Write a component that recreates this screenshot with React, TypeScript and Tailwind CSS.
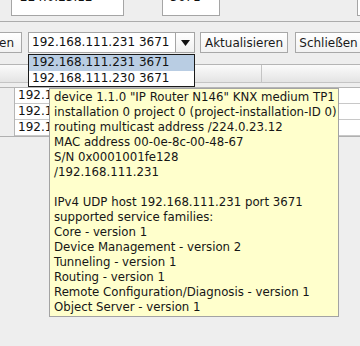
import React from "react";

const tipLines = [
  'device 1.1.0 "IP Router N146" KNX medium TP1',
  "installation 0 project 0 (project-installation-ID 0)",
  "routing multicast address /224.0.23.12",
  "MAC address 00-0e-8c-00-48-67",
  "S/N 0x0001001fe128",
  "/192.168.111.231",
  "",
  "IPv4 UDP host 192.168.111.231 port 3671",
  "supported service families:",
  "Core - version 1",
  "Device Management - version 2",
  "Tunneling - version 1",
  "Routing - version 1",
  "Remote Configuration/Diagnosis - version 1",
  "Object Server - version 1",
];

const rows = ["192.168.111.231 3671", "192.168.111.230 3671", "192.168.111.231 3671"];

function Button({ label, className = "" }: { label: string; className?: string }) {
  return (
    <div
      className={`h-[21px] shrink-0 border border-[#a8a8a8] bg-gradient-to-b from-[#ffffff] to-[#f2f2f2] flex items-center justify-center text-[12px] text-[#1a1a1a] ${className}`}
    >
      {label}
    </div>
  );
}

export default function App() {
  return (
    <div className="relative w-[360px] h-[346px] overflow-hidden bg-[#eeeeee] font-['DejaVu_Sans',sans-serif] text-[#111111]">
      {/* connection settings row, cut off at the top */}
      <div className="flex items-start h-[17px] text-[12px] leading-[15px]">
        <div className="ml-[11px] -mt-[12px] w-[113px] h-[28px] shrink-0 border border-[#a5a5a5] bg-white pl-[8px] pt-[1px]">
          224.0.23.12
        </div>
        <div className="ml-[6px] -mt-[11px] w-[27px] shrink-0">Port:</div>
        <div className="ml-[5px] -mt-[12px] w-[58px] h-[28px] shrink-0 border border-[#a5a5a5] bg-white pl-[7px] pt-[1px]">
          3671
        </div>
        <div className="ml-[12px] -mt-[11px] w-[120px] shrink-0 whitespace-nowrap">Timeout Antwortzeit:</div>
        <div className="ml-[5px] -mt-[12px] w-[40px] h-[28px] shrink-0 border border-[#a5a5a5] bg-white" />
      </div>

      <div className="mt-[4px] h-px bg-[#ababab]" />

      {/* action row */}
      <div className="mt-[10px] flex items-start">
        <Button label="Suchen" className="-ml-[40px] w-[62px] justify-end pr-[7px]" />
        <div className="ml-[6px] flex h-[21px] w-[167px] shrink-0 border border-[#a5a5a5] bg-white">
          <div className="flex-1 pl-[3px] text-[12px] leading-[19px]">192.168.111.231 3671</div>
          <div className="w-[19px] border-l border-[#a5a5a5] bg-gradient-to-b from-[#ffffff] to-[#f0f0f0] flex items-center justify-center">
            <svg width="9" height="6" viewBox="0 0 9 6">
              <path d="M0 0 H9 L4.5 6 Z" fill="#111111" />
            </svg>
          </div>
        </div>
        <Button label="Aktualisieren" className="ml-[5px] w-[88px]" />
        <Button label="Schließen" className="ml-[7px] w-[67px]" />
      </div>

      {/* device table */}
      <div className="mt-[11px]">
        <div className="flex h-[18px] border-t border-[#b5b5b5] bg-gradient-to-b from-[#fbfbfb] to-[#e4e4e4]">
          <div className="w-[262px] border-r border-[#c4c4c4]" />
          <div className="flex-1" />
        </div>
        <div className="h-[5px] border-t border-[#c4c4c4]" />
        <div className="flex border-t border-[#b5b5b5]">
          <div className="w-[15px] border-r border-[#b5b5b5]" />
          <div className="flex-1 bg-white">
            {rows.map((r, i) => (
              <div key={i} className="h-[16px] border-b border-[#c8c8c8] pl-[3px] text-[12px] leading-[15px] whitespace-nowrap">
                {r}
              </div>
            ))}
          </div>
        </div>
        <div className="h-px bg-[#b0b0b0]" />
      </div>

      {/* combo popup list */}
      <div className="absolute left-[28px] top-[54px] w-[167px] border border-[#1a1a1a] bg-white text-[12px] leading-[15px]">
        <div className="h-[16px] bg-[#b9cde3] pl-[3px]">192.168.111.231 3671</div>
        <div className="h-[15px] pl-[3px]">192.168.111.230 3671</div>
      </div>

      {/* tooltip */}
      <div className="absolute left-[49px] top-[88px] w-[290px] h-[229px] border border-[#a3a3a3] bg-[#ffffcc] pl-[4px] pt-[1px] text-[11.75px] leading-[15px] text-[#161616]">
        {tipLines.map((l, i) => (
          <div key={i} className="h-[15px] whitespace-nowrap">
            {l}
          </div>
        ))}
      </div>
    </div>
  );
}
